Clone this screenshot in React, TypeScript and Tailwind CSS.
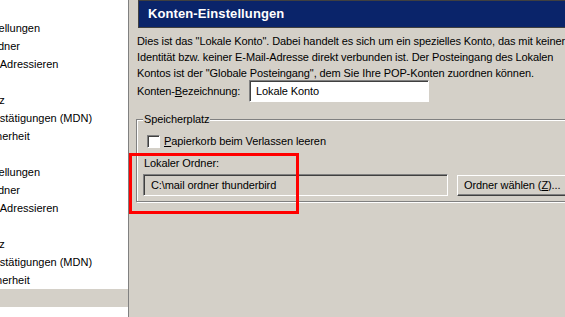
const treeRows = [
  { label: "Lokale Konto", level: 0 },
  { label: "Server-Einstellungen", level: 1 },
  { label: "Kopien & Ordner", level: 1 },
  { label: "Verfassen & Adressieren", level: 1 },
  { label: "Junk-Filter", level: 1 },
  { label: "Speicherplatz", level: 1 },
  { label: "Empfangsbestätigungen (MDN)", level: 1 },
  { label: "S/MIME-Sicherheit", level: 1 },
  { label: "Mail-Konto", level: 0 },
  { label: "Server-Einstellungen", level: 1 },
  { label: "Kopien & Ordner", level: 1 },
  { label: "Verfassen & Adressieren", level: 1 },
  { label: "Junk-Filter", level: 1 },
  { label: "Speicherplatz", level: 1 },
  { label: "Empfangsbestätigungen (MDN)", level: 1 },
  { label: "S/MIME-Sicherheit", level: 1 },
  { label: "Lokale Ordner", level: 0, selected: true },
];

export default function App() {
  return (
    <div
      className="flex h-[317px] w-[565px] overflow-hidden bg-[#d4d0c8] text-[11px] text-black relative"
      style={{ fontFamily: '"Liberation Sans", Arial, sans-serif' }}
    >
      {/* account tree, scrolled to the right */}
      <div className="w-[129px] shrink-0 bg-white border-r border-[#808080] overflow-hidden pt-[1px]">
        {treeRows.map((row, i) => (
          <div
            key={i}
            className={`h-[18px] flex items-center whitespace-nowrap ${row.selected ? "bg-[#d4d0c8]" : ""}`}
          >
            <span className={row.level === 1 ? "ml-[-62px]" : "ml-[-95px]"}>{row.label}</span>
          </div>
        ))}
      </div>

      {/* settings page */}
      <div className="flex-1 min-w-0 pl-[8px] overflow-hidden tracking-[-0.1px]">
        <div className="ml-[1px] h-[28px] w-[600px] bg-[#0a246a] border border-[#404040] flex items-center pl-[9px]">
          <span className="text-white font-bold text-[13px] tracking-[0.1px]">Konten-Einstellungen</span>
        </div>

        <div className="mt-[5px] leading-[16px] whitespace-nowrap">
          <div>Dies ist das "Lokale Konto". Dabei handelt es sich um ein spezielles Konto, das mit keiner</div>
          <div>Identität bzw. keiner E-Mail-Adresse direkt verbunden ist. Der Posteingang des Lokalen</div>
          <div>Kontos ist der "Globale Posteingang", dem Sie Ihre POP-Konten zuordnen können.</div>
        </div>

        <div className="mt-[-1px] flex items-center">
          <span className="w-[112px]">
            Konten-<span className="underline">B</span>ezeichnung:
          </span>
          <div className="w-[180px] h-[22px] bg-white border border-t-[#808080] border-l-[#808080] border-b-white border-r-white shadow-[inset_1px_1px_0_#404040] flex items-center pl-[6px]">
            Lokale Konto
          </div>
        </div>

        {/* Speicherplatz group */}
        <div className="relative mt-[17px] ml-[-1px] w-[500px] h-[83px] border border-[#808080] shadow-[1px_1px_0_#fff,inset_1px_1px_0_#fff]">
          <span className="absolute left-[6px] top-[-8px] bg-[#d4d0c8] px-[1px] leading-[14px]">Speicherplatz</span>

          <div className="mt-[13px] ml-[10px] flex items-center">
            <div className="w-[13px] h-[13px] bg-white border border-t-[#808080] border-l-[#808080] border-b-white border-r-white shadow-[inset_1px_1px_0_#404040]" />
            <span className="ml-[4px]">
              <span className="underline">P</span>apierkorb beim Verlassen leeren
            </span>
          </div>

          <div className="mt-[5px] ml-[7px]">Lokaler Ordner:</div>

          <div className="mt-[3px] ml-[6px] flex items-center">
            <div className="w-[305px] h-[22px] bg-[#d4d0c8] border border-t-[#808080] border-l-[#808080] border-b-white border-r-white shadow-[inset_1px_1px_0_#404040] flex items-center pl-[7px]">
              C:\mail ordner thunderbird
            </div>
            <button className="ml-[9px] w-[110px] h-[21px] bg-[#d4d0c8] border border-t-white border-l-white border-b-[#404040] border-r-[#404040] shadow-[inset_-1px_-1px_0_#808080] text-left pl-[6px]">
              Ordner wählen (<span className="underline">Z</span>)...
            </button>
          </div>
        </div>
      </div>

      {/* red highlight drawn over the dialog */}
      <div className="absolute left-[129px] top-[153px] w-[170px] h-[61px] border-[3px] border-[#ff0000]" />
    </div>
  );
}
